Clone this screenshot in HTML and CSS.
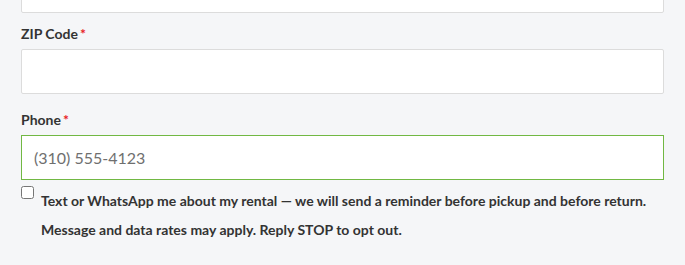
FILE: index.html
```html
<!DOCTYPE html>
<html lang="en">
<head>
<meta charset="utf-8">
<title>Contact details</title>
<link rel="stylesheet" href="styles.css">
</head>
<body>
<form class="form">
  <div class="field field--cut">
    <input class="input" type="text" aria-label="City">
  </div>
  <div class="field field--zip">
    <label class="label" for="zip">ZIP Code<span class="req">*</span></label>
    <input class="input" id="zip" type="text">
  </div>
  <div class="field">
    <label class="label" for="phone">Phone<span class="req">*</span></label>
    <input class="input input--focus" id="phone" type="tel" placeholder="(310) 555-4123">
  </div>
  <label class="consent">
    <input class="check" type="checkbox">
    <span class="consent-text">Text or WhatsApp me about my rental — we will send a reminder before pickup and before return. Message and data rates may apply. Reply STOP to opt out.</span>
  </label>
</form>
</body>
</html>
```
FILE: styles.css
```css
html, body {
  margin: 0;
  padding: 0;
  background: #f5f6f8;
}
body {
  font-family: Lato, "Noto Sans", "Liberation Sans", sans-serif;
  color: #333;
  overflow: hidden;
}
.form {
  padding: 0 21px;
  margin-top: -32px;
}
.field {
  margin-top: 16px;
}
.field--cut {
  margin-top: 0;
}
.field--zip {
  margin-top: 11px;
}
.label {
  display: block;
  font-size: 14px;
  font-weight: 700;
  line-height: 20px;
  margin-bottom: 5px;
  color: #333;
}
.req {
  color: #e8201e;
  margin-left: 2px;
}
.input {
  display: block;
  box-sizing: border-box;
  width: 100%;
  height: 45px;
  margin: 0;
  padding: 0 12px;
  background: #fff;
  border: 1px solid #dcdcdc;
  border-radius: 2px;
  font-family: Lato, "Noto Sans", "Liberation Sans", sans-serif;
  font-size: 16px;
  color: #333;
  outline: none;
}
.input::placeholder {
  color: #6f6f6f;
}
.input--focus {
  border-color: #71b843;
  border-radius: 0;
}
.consent {
  display: flex;
  align-items: flex-start;
  margin-top: 6px;
}
.check {
  flex: none;
  width: 13px;
  height: 13px;
  margin: 0 7px 0 0;
}
.consent-text {
  font-size: 14px;
  font-weight: 700;
  line-height: 29px;
  color: #333;
}
```
